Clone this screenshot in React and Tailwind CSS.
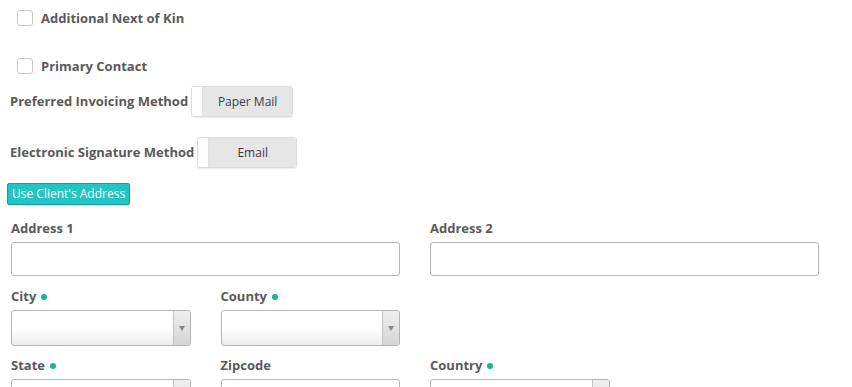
import React from 'react';

// Small rounded checkbox with a bold label beside it
const CheckRow = ({ label, className }) => (
    <div className={`flex items-center gap-2 ml-[7px] h-4 ${className || ''}`}>
        <span className="w-4 h-4 rounded-[3px] border border-[#c8c8c8] bg-white"></span>
        <span className="text-[13px] font-bold text-[#5a5a5a] translate-y-px">{label}</span>
    </div>
);

// Label + toggle switch showing its current value
const ToggleRow = ({ label, value, width, className }) => (
    <div className={`flex items-center h-[31px] ${className || ''}`}>
        <span className="text-[13px] font-bold text-[#5a5a5a] whitespace-nowrap">{label}</span>
        <div className={`ml-[3px] flex h-[31px] ${width} rounded-[3px] border border-[#dcdcdc] overflow-hidden shadow-[0_1px_1px_rgba(0,0,0,0.08)]`}>
            <span className="w-[11px] bg-white border-r border-[#e2e2e2]"></span>
            <span className="flex-1 flex items-center justify-center bg-[#e6e6e6] text-[12px] text-[#3a3a4a]">{value}</span>
        </div>
    </div>
);

const Dot = () => <span className="inline-block w-[6px] h-[6px] rounded-full bg-[#1ab394] ml-[5px]"></span>;

const FieldLabel = ({ children, required }) => (
    <div className="flex items-center h-[18px] text-[13px] font-bold text-[#5a5a5a]">
        {children}
        {required && <Dot />}
    </div>
);

const TextInput = () => (
    <div className="h-[34px] rounded-[3px] border border-[#b4b4b4] bg-white"></div>
);

const SelectBox = () => (
    <div className="flex h-[36px] rounded-[3px] border border-[#b4b4b4] overflow-hidden bg-gradient-to-b from-white from-50% to-[#ececec]">
        <div className="flex-1"></div>
        <div className="w-[17px] border-l border-[#c4c4c4] bg-gradient-to-b from-[#f0f0f0] to-[#d4d4d4] flex items-center justify-center">
            <span className="w-0 h-0 border-l-[3px] border-r-[3px] border-t-[5px] border-l-transparent border-r-transparent border-t-[#888]"></span>
        </div>
    </div>
);

export default function App() {
    return (
        <div className="w-[852px] h-[387px] overflow-hidden bg-white pl-[10px] pt-[10px] font-['Open_Sans',sans-serif]">
            <CheckRow label="Additional Next of Kin" />
            <CheckRow label="Primary Contact" className="mt-[32px]" />

            <ToggleRow label="Preferred Invoicing Method" value="Paper Mail" width="w-[102px]" className="mt-[12px]" />
            <ToggleRow label="Electronic Signature Method" value="Email" width="w-[100px]" className="mt-[20px]" />

            <button className="mt-[15px] -ml-[3px] h-[22px] px-[4px] rounded-[2px] border border-[#14a0a0] bg-[#22c5c5] text-white text-[12px] leading-none">
                Use Client's Address
            </button>

            <div className="mt-[15px] ml-px w-[808px] grid grid-cols-4 gap-x-[30px]">
                <div className="col-span-2">
                    <FieldLabel>Address 1</FieldLabel>
                    <div className="mt-[4px]"><TextInput /></div>
                </div>
                <div className="col-span-2">
                    <FieldLabel>Address 2</FieldLabel>
                    <div className="mt-[4px]"><TextInput /></div>
                </div>

                <div className="mt-[12px]">
                    <FieldLabel required>City</FieldLabel>
                    <div className="mt-[4px]"><SelectBox /></div>
                </div>
                <div className="mt-[12px]">
                    <FieldLabel required>County</FieldLabel>
                    <div className="mt-[4px]"><SelectBox /></div>
                </div>
                <div></div>
                <div></div>

                <div className="mt-[11px]">
                    <FieldLabel required>State</FieldLabel>
                    <div className="mt-[4px]"><SelectBox /></div>
                </div>
                <div className="mt-[11px]">
                    <FieldLabel>Zipcode</FieldLabel>
                    <div className="mt-[4px]"><TextInput /></div>
                </div>
                <div className="mt-[11px]">
                    <FieldLabel required>Country</FieldLabel>
                    <div className="mt-[4px]"><SelectBox /></div>
                </div>
            </div>
        </div>
    );
}
